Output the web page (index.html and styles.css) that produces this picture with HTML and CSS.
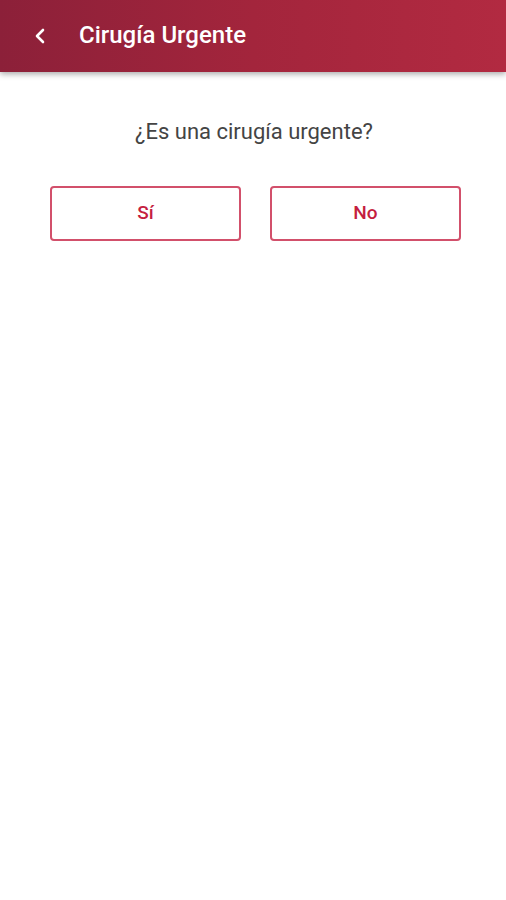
FILE: index.html
```html
<!DOCTYPE html>
<html lang="es">
<head>
<meta charset="utf-8">
<link rel="stylesheet" href="styles.css">
</head>
<body>
<header class="appbar">
  <button class="back" aria-label="Atrás">
    <svg width="14" height="16" viewBox="0 0 14 16"><path d="M10 2 L4 8 L10 14" fill="none" stroke="#fff" stroke-width="2.6" stroke-linecap="round" stroke-linejoin="round"/></svg>
  </button>
  <h1 class="title">Cirugía Urgente</h1>
</header>
<main class="content">
  <p class="question">¿Es una cirugía urgente?</p>
  <div class="choices">
    <button class="choice">Sí</button>
    <button class="choice">No</button>
  </div>
</main>
</body>
</html>
```
FILE: styles.css
```css
* { box-sizing: border-box; }
html, body { margin: 0; padding: 0; background: #fff; }
body { font-family: Roboto, "Noto Sans", sans-serif; width: 506px; height: 900px; overflow: hidden; }
.appbar {
  height: 72px;
  display: flex;
  align-items: center;
  background: linear-gradient(90deg, #8c2039 0%, #a3253c 50%, #b22a41 100%);
  box-shadow: 0 2px 6px rgba(0,0,0,0.35);
  padding-left: 31px;
}
.back {
  background: none; border: 0; padding: 0; margin: 0;
  width: 18px; height: 20px;
  display: flex; align-items: center; justify-content: center;
}
.title {
  margin: 0 0 0 30px;
  color: #fff;
  font-size: 24px;
  font-weight: 500;
  letter-spacing: 0;
  padding-bottom: 2px;
}
.content { padding: 0 46px 0 50px; }
.question {
  margin: 47px 0 0;
  text-align: center;
  font-size: 22px;
  color: #444;
  line-height: 26px;
  padding-right: 2px;
}
.choices {
  margin-top: 41px;
  display: grid;
  grid-template-columns: 191px 191px;
  column-gap: 29px;
}
.choice {
  height: 55px;
  background: #fff;
  border: 2px solid #d2506b;
  border-radius: 4px;
  color: #c51e40;
  font-family: Roboto, "Noto Sans", sans-serif;
  font-size: 19px;
  font-weight: 500;
  padding: 0 0 3px;
}
```
